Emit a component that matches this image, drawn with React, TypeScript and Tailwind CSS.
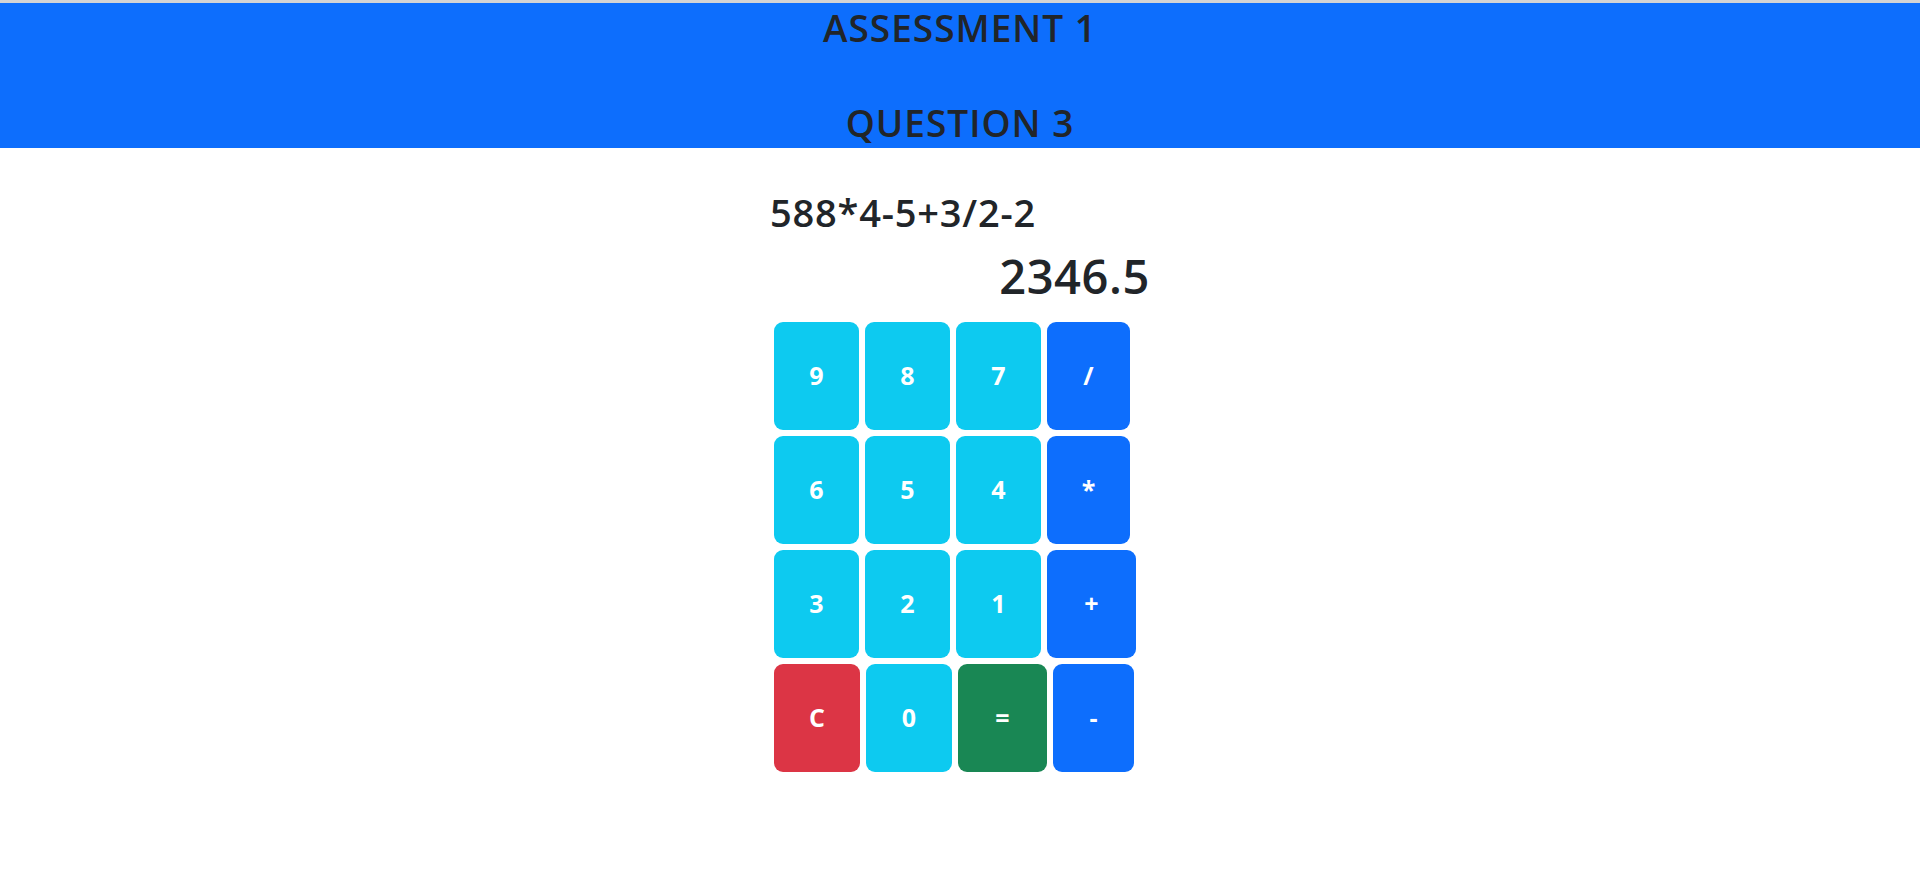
import React, { useState } from "react";

type Key = { label: string; width: string; color: string };

const rows: Key[][] = [
  [
    { label: "9", width: "w-[85px]", color: "bg-[#0dcaf0]" },
    { label: "8", width: "w-[85px]", color: "bg-[#0dcaf0]" },
    { label: "7", width: "w-[85px]", color: "bg-[#0dcaf0]" },
    { label: "/", width: "w-[83px]", color: "bg-[#0d6efd]" },
  ],
  [
    { label: "6", width: "w-[85px]", color: "bg-[#0dcaf0]" },
    { label: "5", width: "w-[85px]", color: "bg-[#0dcaf0]" },
    { label: "4", width: "w-[85px]", color: "bg-[#0dcaf0]" },
    { label: "*", width: "w-[83px]", color: "bg-[#0d6efd]" },
  ],
  [
    { label: "3", width: "w-[85px]", color: "bg-[#0dcaf0]" },
    { label: "2", width: "w-[85px]", color: "bg-[#0dcaf0]" },
    { label: "1", width: "w-[85px]", color: "bg-[#0dcaf0]" },
    { label: "+", width: "w-[89px]", color: "bg-[#0d6efd]" },
  ],
  [
    { label: "C", width: "w-[86px]", color: "bg-[#dc3545]" },
    { label: "0", width: "w-[86px]", color: "bg-[#0dcaf0]" },
    { label: "=", width: "w-[89px]", color: "bg-[#198754]" },
    { label: "-", width: "w-[81px]", color: "bg-[#0d6efd]" },
  ],
];

const App = () => {
  const [expression, setExpression] = useState("588*4-5+3/2-2");
  const [result, setResult] = useState("2346.5");

  const press = (label: string) => {
    if (label === "C") {
      setExpression("");
      setResult("");
      return;
    }
    if (label === "=") {
      try {
        // eslint-disable-next-line no-new-func
        const value = Function(`return (${expression})`)();
        setResult(String(value));
      } catch (e) {
        setResult("Error");
      }
      return;
    }
    setExpression(expression + label);
  };

  return (
    <div
      className="min-h-[882px] bg-white text-[#212529]"
      style={{ fontFamily: '"Open Sans", "Noto Sans", sans-serif' }}
    >
      <div className="flex h-[148px] flex-col justify-between border-t-[3px] border-[#d4d4d4] bg-[#0d6efd] pt-[2px] pb-[2px] text-center">
        <h2 className="text-[37px] font-semibold leading-[46px] tracking-[1px]">ASSESSMENT 1</h2>
        <h2 className="text-[37px] font-semibold leading-[46px] tracking-[1px]">QUESTION 3</h2>
      </div>

      <div className="mx-auto w-[380px]">
        <h2 className="mt-[41px] text-[38px] font-semibold leading-[47px] tracking-[0.8px]">
          {expression}
        </h2>
        <h1 className="mt-[11px] text-right text-[47px] font-semibold leading-[58px] tracking-[0.6px]">
          {result}
        </h1>

        <div className="mt-[17px] flex flex-col gap-[6px] pl-[4px]">
          {rows.map((row, i) => (
            <div key={i} className="flex gap-[6px]">
              {row.map((key) => (
                <button
                  key={key.label}
                  onClick={() => press(key.label)}
                  className={`flex h-[108px] items-center justify-center rounded-[9px] text-[25px] font-bold text-white ${key.width} ${key.color}`}
                >
                  {key.label}
                </button>
              ))}
            </div>
          ))}
        </div>
      </div>
    </div>
  );
};

export default App;
